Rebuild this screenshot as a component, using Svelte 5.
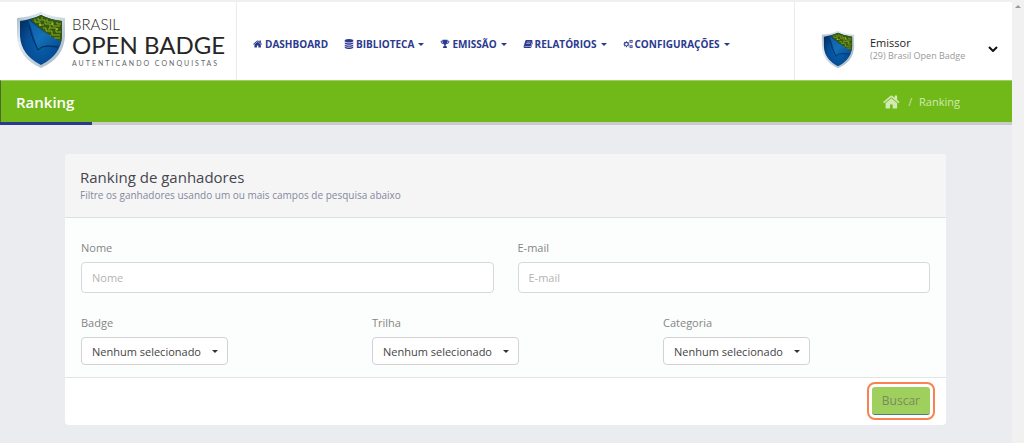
<script>
	let nome = $state('');
	let email = $state('');

	const menu = [
		{ label: 'DASHBOARD', icon: 'home', drop: false },
		{ label: 'BIBLIOTECA', icon: 'database', drop: true },
		{ label: 'EMISSÃO', icon: 'trophy', drop: true },
		{ label: 'RELATÓRIOS', icon: 'book', drop: true },
		{ label: 'CONFIGURAÇÕES', icon: 'cogs', drop: true }
	];

	const filtros = [
		{ id: 'badge', label: 'Badge' },
		{ id: 'trilha', label: 'Trilha' },
		{ id: 'categoria', label: 'Categoria' }
	];

	const icons = {
		home: 'M1408 992v480q0 26-19 45t-45 19h-384v-384h-256v384h-384q-26 0-45-19t-19-45v-480q0-1 .5-3t.5-3l575-474 575 474q1 2 1 6zm223-69l-62 74q-8 9-21 11h-3q-13 0-21-7l-692-577-692 577q-12 8-24 7-13-2-21-11l-62-74q-8-10-7-23.5t11-21.5l719-599q32-26 76-26t76 26l244 204v-195q0-14 9-23t23-9h192q14 0 23 9t9 23v408l219 182q10 8 11 21.5t-7 23.5z',
		database: 'M896 768q237 0 443-43t325-127v170q0 69-103 128t-280 93.5-385 34.5-385-34.5-280-93.5-103-128v-170q119 84 325 127t443 43zm0 768q237 0 443-43t325-127v170q0 69-103 128t-280 93.5-385 34.5-385-34.5-280-93.5-103-128v-170q119 84 325 127t443 43zm0-384q237 0 443-43t325-127v170q0 69-103 128t-280 93.5-385 34.5-385-34.5-280-93.5-103-128v-170q119 84 325 127t443 43zm0-1152q208 0 385 34.5t280 93.5 103 128v128q0 69-103 128t-280 93.5-385 34.5-385-34.5-280-93.5-103-128v-128q0-69 103-128t280-93.5 385-34.5z',
		trophy: 'M448 128H1344V320H1664V480C1664 700 1480 850 1240 870C1180 960 1100 1000 1020 1040V1230C1020 1320 1240 1330 1240 1450V1600H552V1450C552 1330 772 1320 772 1230V1040C692 1000 612 960 552 870C312 850 128 700 128 480V320H448ZM256 440C256 590 350 700 490 735C460 640 448 550 448 440ZM1344 440C1344 550 1332 640 1302 735C1442 700 1536 590 1536 440Z',
		book: 'M560 190H1600Q1720 210 1680 340L1410 1230Q1370 1340 1250 1340H300Q210 1350 240 1430H1290Q1420 1420 1460 1300L1730 440Q1800 500 1770 620L1490 1480Q1440 1600 1310 1600H260Q80 1570 90 1370L410 340Q460 220 560 190ZM680 480L650 580H1340L1370 480ZM590 750L560 850H1260L1290 750Z',
		cogs: 'M530 400H690L716 550L812 588L937 498L1046 607L958 736L996 828L1142 853V1007L996 1032L958 1124L1046 1253L937 1362L812 1272L716 1310L690 1460H530L504 1310L408 1272L283 1362L174 1253L262 1124L224 1032L78 1007V853L224 828L262 736L174 607L283 498L408 588L504 550ZM610 710A220 220 0 1 0 610 1150A220 220 0 1 0 610 710ZM1450 120L1550 230L1690 200L1760 320L1670 430L1760 550L1690 670L1550 640L1450 750L1340 640L1200 670L1130 550L1220 430L1130 320L1200 200L1340 230ZM1450 320A115 115 0 1 0 1450 550A115 115 0 1 0 1450 320ZM1450 1040L1550 1150L1690 1120L1760 1240L1670 1350L1760 1470L1690 1590L1550 1560L1450 1670L1340 1560L1200 1590L1130 1470L1220 1350L1130 1240L1200 1120L1340 1150ZM1450 1240A115 115 0 1 0 1450 1470A115 115 0 1 0 1450 1240Z'
	};
</script>

{#snippet icon(name)}
	<svg class="icon" viewBox="0 0 1792 1792" aria-hidden="true">
		<path fill="currentColor" fill-rule="evenodd" d={icons[name]} />
	</svg>
{/snippet}

{#snippet shield(id)}
	<svg class="shield" viewBox="0 0 50 58" aria-hidden="true">
		<defs>
			<linearGradient id="{id}-rim" x1="0" y1="0" x2="1" y2="1">
				<stop offset="0" stop-color="#9fb1bf" />
				<stop offset="0.3" stop-color="#e4edf2" />
				<stop offset="0.6" stop-color="#c3d0da" />
				<stop offset="1" stop-color="#9db0be" />
			</linearGradient>
			<radialGradient id="{id}-blue" cx="0.5" cy="0.6" r="0.6">
				<stop offset="0" stop-color="#0860ab" />
				<stop offset="0.6" stop-color="#064d96" />
				<stop offset="1" stop-color="#033468" />
			</radialGradient>
			<linearGradient id="{id}-fold" x1="0" y1="0" x2="1" y2="1">
				<stop offset="0" stop-color="#0a5aa4" />
				<stop offset="0.5" stop-color="#1470b8" />
				<stop offset="1" stop-color="#064a8c" />
			</linearGradient>
		</defs>
		<path fill="url(#{id}-rim)" d="M1 7Q15 6 25 1Q35 6 49 7V25Q48 47 25 57Q2 47 1 25Z" />
		<path fill="url(#{id}-blue)" d="M4 10Q16 8 25 4Q35 9 46 10V25Q45 44 25 54Q5 44 4 25Z" />
		<path fill="#35590f" d="M14 8Q20 7 25 4Q35 9 46 10V25L45 31Q27 22 14 8Z" />
		<g fill="none" stroke="#8cae22" stroke-width="1">
			<path d="M19 8V11H24V14H28M22 7V9H29V13H34V17M31 8V11H37V15H44M41 11V13H45M26 6V8M27 17H30V20H36V24H44M33 19V17H40V21H45M34 24V26M38 27H44" />
		</g>
		<g fill="#a5c433">
			<circle cx="24" cy="14" r="1" />
			<circle cx="36" cy="13" r="1" />
			<circle cx="41" cy="18" r="1" />
		</g>
		<path fill="url(#{id}-fold)" d="M12 8Q25 21 45 31L43 35Q30 32 22 38Q18 25 12 8Z" />
		<path fill="none" stroke="#032a57" stroke-width="1" d="M13 14Q16 28 22 39Q25 35 32 35L42 36" />
	</svg>
{/snippet}

<div class="window">
	<div class="page">
		<header>
			<a class="brand" href="#inicio">
				{@render shield('logo')}
				<span class="brand-text">
					<span class="brand-top">BRASIL</span>
					<span class="brand-name">OPEN BADGE</span>
					<span class="brand-tag">AUTENTICANDO CONQUISTAS</span>
				</span>
			</a>
			<nav>
				{#each menu as m}
					<a href="#{m.icon}">
						{@render icon(m.icon)}
						<span>{m.label}</span>
						{#if m.drop}<i class="caret"></i>{/if}
					</a>
				{/each}
			</nav>
			<button class="user" type="button">
				{@render shield('user')}
				<span class="user-text">
					<span class="user-name">Emissor</span>
					<span class="user-org">(29) Brasil Open Badge</span>
				</span>
				<svg class="chevron" viewBox="0 0 10 6" aria-hidden="true">
					<path d="M1 1L5 5L9 1" fill="none" stroke="#111" stroke-width="2" />
				</svg>
			</button>
		</header>

		<div class="titlebar">
			<h1>Ranking</h1>
			<div class="crumbs">
				<a href="#dashboard" aria-label="Dashboard">{@render icon('home')}</a>
				<span class="slash">/</span>
				<span>Ranking</span>
			</div>
		</div>
		<div class="strip"><div class="strip-fill"></div></div>

		<main>
			<form class="card" onsubmit={(e) => e.preventDefault()}>
				<div class="card-head">
					<h2>Ranking de ganhadores</h2>
					<p>Filtre os ganhadores usando um ou mais campos de pesquisa abaixo</p>
				</div>
				<div class="card-body">
					<div class="row two">
						<div class="field">
							<label for="nome">Nome</label>
							<input id="nome" type="text" placeholder="Nome" bind:value={nome} />
						</div>
						<div class="field">
							<label for="email">E-mail</label>
							<input id="email" type="email" placeholder="E-mail" bind:value={email} />
						</div>
					</div>
					<div class="row three">
						{#each filtros as f}
							<div class="field">
								<label for={f.id}>{f.label}</label>
								<div class="select">
									<select id={f.id}>
										<option>Nenhum selecionado</option>
									</select>
									<i class="caret"></i>
								</div>
							</div>
						{/each}
					</div>
				</div>
				<div class="card-foot">
					<button class="buscar" type="submit">Buscar</button>
				</div>
			</form>
		</main>
	</div>
	<div class="scroll"><i class="scroll-up"></i></div>
</div>

<style>
	:global(body) {
		background: #ebecf0;
		font-family: 'Open Sans', sans-serif;
	}

	* { box-sizing: border-box; }
	a { color: inherit; text-decoration: none; }
	button, input, select { font-family: inherit; }

	.window {
		display: flex;
		min-height: 100vh;
	}
	.page { flex: 1; min-width: 0; }

	.scroll {
		display: flex;
		justify-content: center;
		width: 12px;
		padding-top: 5px;
		background: #f1f1f1;
	}
	.scroll-up {
		width: 0;
		height: 0;
		border: 3px solid transparent;
		border-top: 0;
		border-bottom: 3px solid #9a9a9a;
	}

	header {
		display: flex;
		height: 80px;
		border-top: 2px solid #efeff0;
		background: #fff;
	}

	.brand {
		display: flex;
		align-items: center;
		gap: 6px;
		width: 237px;
		padding: 0 0 2px 16px;
		border-right: 1px solid #ebebeb;
	}
	.brand .shield { width: 50px; height: 58px; }
	.brand-text {
		display: flex;
		flex-direction: column;
		padding-top: 4px;
		font-family: Lato, sans-serif;
		color: #262626;
		white-space: nowrap;
	}
	.brand-top { font-size: 15px; line-height: 16px; font-weight: 300; }
	.brand-name { font-size: 24px; line-height: 26px; }
	.brand-tag { font-size: 7px; line-height: 10px; letter-spacing: 2px; color: #666; }

	nav {
		display: flex;
		flex: 1;
		align-items: center;
		gap: 16px;
		padding: 6px 0 0 16px;
		color: #2b3990;
		font-size: 10px;
		font-weight: 700;
		white-space: nowrap;
	}
	nav a { display: flex; align-items: center; gap: 2px; }
	nav .icon { width: 10px; height: 10px; }
	.icon { display: block; }

	.caret {
		width: 0;
		height: 0;
		border: 3px solid transparent;
		border-top-color: currentColor;
		border-bottom: 0;
	}
	nav .caret { margin-left: 2px; }

	.user {
		display: flex;
		align-items: center;
		width: 218px;
		padding: 16px 14px 0 26px;
		border: 0;
		border-left: 1px solid #ebebeb;
		background: none;
		text-align: left;
	}
	.user .shield { width: 34px; height: 39px; }
	.user-text { display: flex; flex: 1; flex-direction: column; margin-left: 15px; white-space: nowrap; }
	.user-name { font-size: 11px; line-height: 13px; color: #222; }
	.user-org { font-size: 9px; line-height: 13px; color: #999; }
	.chevron { width: 10px; height: 6px; }

	.titlebar {
		display: flex;
		align-items: center;
		justify-content: space-between;
		height: 42px;
		padding: 0 52px 0 15px;
		border-top: 1px solid #a0cd66;
		border-left: 1px solid #4c6b2c;
		background: #70b919;
		color: #fff;
	}
	h1 { margin: 0; font-size: 15px; line-height: 20px; font-weight: 600; }
	.crumbs { display: flex; align-items: center; gap: 7px; font-size: 11px; color: #d1e9b3; }
	.crumbs .icon { width: 18px; height: 18px; }
	.slash { font-size: 10px; }

	.strip { height: 3px; background: #c9cbcb; }
	.strip-fill { width: 92px; height: 3px; background: #2b3990; }

	main { padding: 29px 66px 18px 65px; }
	.card {
		overflow: hidden;
		border-radius: 4px;
		background: #fff;
	}
	.card-head {
		padding: 12px 15px 14px;
		border-bottom: 1px solid #dedfe0;
		background: #f5f5f5;
	}
	h2 { margin: 0; font-size: 15px; line-height: 22px; font-weight: 400; color: #464650; }
	p { margin: 0; font-size: 10px; line-height: 15px; color: #8588a0; }

	.card-body {
		padding: 22px 16px 12px;
		border-bottom: 1px solid #e3e4e4;
		background: #fcfdfd;
	}
	.row { display: grid; gap: 24px; }
	.two { grid-template-columns: 1fr 1fr; }
	.three { grid-template-columns: 1fr 1fr 1fr; margin-top: 22px; }
	.field { min-width: 0; }
	label { display: block; margin-bottom: 7px; font-size: 11px; line-height: 15px; color: #858585; }

	input {
		display: block;
		width: 100%;
		height: 31px;
		padding: 0 10px;
		border: 1px solid #d5d8de;
		border-radius: 4px;
		background: #fff;
		font-size: 11px;
		color: #555;
	}
	input::placeholder { color: #b4b4b4; opacity: 1; }

	.select { display: grid; align-items: center; width: 147px; }
	.select > * { grid-area: 1 / 1; }
	select {
		appearance: none;
		width: 100%;
		height: 28px;
		padding: 0 10px;
		border: 1px solid #d2d2d2;
		border-radius: 4px;
		background: #fff;
		font-size: 11px;
		color: #444;
	}
	.select .caret { justify-self: end; margin-right: 10px; color: #333; pointer-events: none; }

	.card-foot {
		display: flex;
		justify-content: flex-end;
		padding: 9px 16px 10px;
	}
	.buscar {
		height: 28px;
		padding: 0 10px;
		border: 0;
		border-bottom: 1px solid #4f7f77;
		border-radius: 3px;
		outline: 2px solid #fa8250;
		outline-offset: 3px;
		background: #9fd05d;
		color: #7b8a62;
		font-size: 12px;
	}
</style>
